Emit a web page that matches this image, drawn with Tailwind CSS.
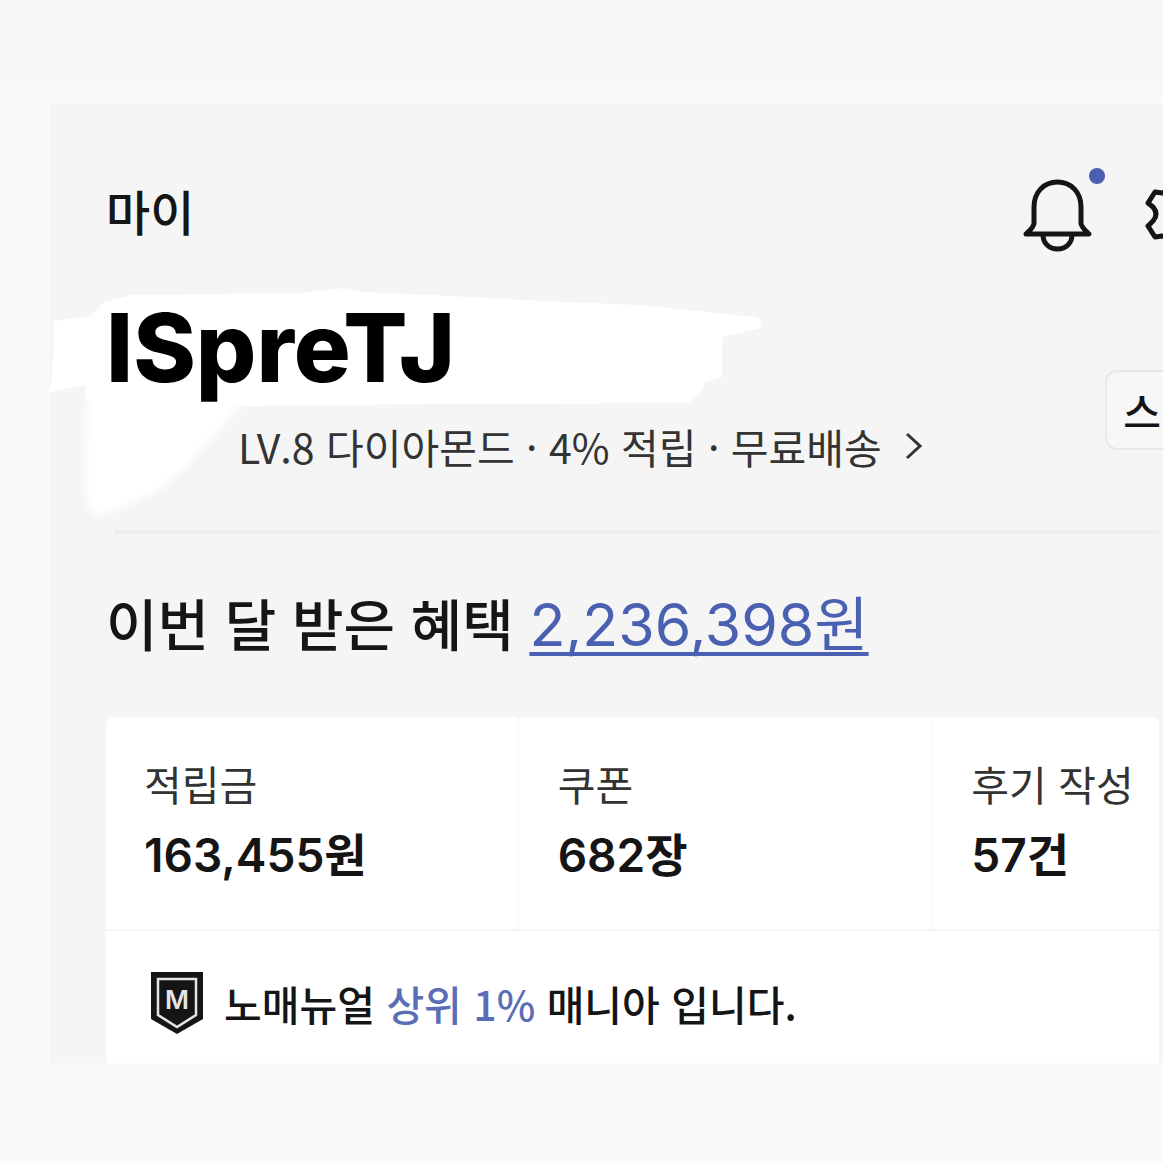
<!DOCTYPE html>
<html lang="ko">
<head>
    <meta charset="UTF-8">
    <meta name="viewport" content="width=device-width, initial-scale=1.0">
    <title>마이</title>
    <script src="https://cdn.jsdelivr.net/npm/@tailwindcss/browser@4"></script>
</head>
<body class="min-h-screen overflow-x-hidden bg-[#fafafa] text-[#151515] font-['Noto_Sans_CJK_KR',sans-serif]">
    <div class="h-24 bg-linear-to-b from-[#f6f6f6] to-[#f8f8f8]"></div>

    <main class="ml-[50px] mt-2 overflow-hidden bg-[#f5f5f5] pl-14 pr-1">

        <!-- Header -->
        <header class="flex items-start pt-16">
            <h1 class="mt-2 text-[48px] leading-[68px] font-medium">마이</h1>
            <div class="-mr-14 ml-auto flex gap-12">
                <button aria-label="알림" class="relative mt-2">
                    <svg class="h-[76px] w-[76px]" viewBox="0 0 76 76" fill="none" stroke="#151515" stroke-width="5" stroke-linejoin="round">
                        <path d="M13 47V31C13 16 23 6 36.500 6S60 16 60 31V47C60 51 64 54 68 58H5C9 54 13 51 13 47Z"/>
                        <path d="M22 59C22 67 28 73 36.500 73S51 67 51 59"/>
                    </svg>
                    <span class="absolute -right-2 -top-2 h-4 w-4 rounded-full bg-[#4c5fae]"></span>
                </button>
                <button aria-label="설정" class="mt-2">
                    <svg class="h-[76px] w-[70px]" viewBox="0 0 70 76" fill="none" stroke="#151515" stroke-width="5" stroke-linejoin="round">
                        <path d="M17 17L10 16L3 27L8 31Q14 38 8 45L3 50L10 61L17 60Q25 61 27 70H43Q45 61 53 60L60 61L67 50L62 45Q56 38 62 31L67 27L60 16L53 17Q45 15 43 7H27Q25 15 17 17Z"/>
                        <circle cx="35" cy="38" r="10"/>
                    </svg>
                </button>
            </div>
        </header>

        <!-- Profile -->
        <section class="relative flex items-start justify-between pb-[54px] pt-10">
            <svg class="absolute -left-14 top-8 h-[240px] w-[720px]" viewBox="50 285 720 240" fill="#ffffff">
                <path d="M54 322L90 317L104 303L132 296L300 294L345 289L362 293L430 296L540 302L640 306L755 318Q766 321 760 329L740 334L722 338V378L704 384L701 394L688 404L430 405L250 407L86 400V386L50 393L53 360Z"/>
                <path class="blur-xs" d="M88 380H260L236 412L214 436L188 466L158 492L128 506L98 518Q88 512 84 490Z"/>
            </svg>
            <div class="relative">
                <h2 class="font-['Inter'] text-[95px] leading-[112px] font-extrabold text-black">ISpreTJ</h2>
                <a href="#" class="ml-32 mt-3 flex items-center gap-4 pl-1 text-[41px] leading-[60px] text-[#333333]">
                    LV.8 다이아몬드 · 4% 적립 · 무료배송
                    <svg class="h-8 w-8" viewBox="0 0 32 32" fill="none" stroke="#333333" stroke-width="3">
                        <path d="M9 4L22 16L9 28"/>
                    </svg>
                </a>
            </div>
            <button class="-mr-5 mt-[78px] h-20 shrink-0 rounded-xl border-2 border-[#e8e8e8] bg-[#f7f7f7] px-4 text-[41px] leading-[60px] font-medium">스</button>
        </section>
        <hr class="ml-2 border-t-4 border-[#eeeeee]">

        <!-- Benefits this month -->
        <p class="pb-12 pt-11 text-[56px] leading-[88px] font-medium whitespace-nowrap">
            이번 달 받은 혜택
            <a href="#" class="font-['Inter','Noto_Sans_CJK_KR'] text-[59px] font-normal text-[#4a60b0] underline decoration-4 underline-offset-6 [text-decoration-skip-ink:none]">2,236,398원</a>
        </p>

        <div class="rounded-t-lg bg-white">
            <dl class="grid grid-cols-[11fr_11fr_6fr] border-b-2 border-[#f5f5f5] whitespace-nowrap">
                <div class="border-r-4 border-[#fafafa] pb-9 pl-[38px] pt-9">
                    <dt class="text-[41px] leading-[60px] text-[#333333]">적립금</dt>
                    <dd class="mt-1 font-['Inter','Noto_Sans_CJK_KR'] text-[46px] leading-[76px] font-semibold">163,455원</dd>
                </div>
                <div class="border-r-4 border-[#fcfcfc] pb-9 pl-[38px] pt-9">
                    <dt class="text-[41px] leading-[60px] text-[#333333]">쿠폰</dt>
                    <dd class="mt-1 font-['Inter','Noto_Sans_CJK_KR'] text-[46px] leading-[76px] font-semibold">682장</dd>
                </div>
                <div class="pb-9 pl-[38px] pt-9">
                    <dt class="text-[41px] leading-[60px] text-[#333333]">후기 작성</dt>
                    <dd class="mt-1 font-['Inter','Noto_Sans_CJK_KR'] text-[46px] leading-[76px] font-semibold">57건</dd>
                </div>
            </dl>
            <div class="flex items-center gap-5 px-11 pb-7 pt-10">
                <svg class="h-16 w-[54px]" viewBox="0 0 54 64">
                    <path d="M1 1H53V48L27 63L1 48Z" fill="#151515"/>
                    <path d="M8 8H46V44L27 56L8 44Z" fill="none" stroke="#e5e5e5" stroke-width="2.500"/>
                    <text x="27" y="38" text-anchor="middle" font-family="Inter" font-size="26" font-weight="600" fill="#e5e5e5">M</text>
                </svg>
                <p class="text-[41px] leading-[60px] font-medium">노매뉴얼 <span class="text-[#5a6eb5]">상위 1%</span> 매니아 입니다.</p>
            </div>
        </div>
    </main>
</body>
</html>
